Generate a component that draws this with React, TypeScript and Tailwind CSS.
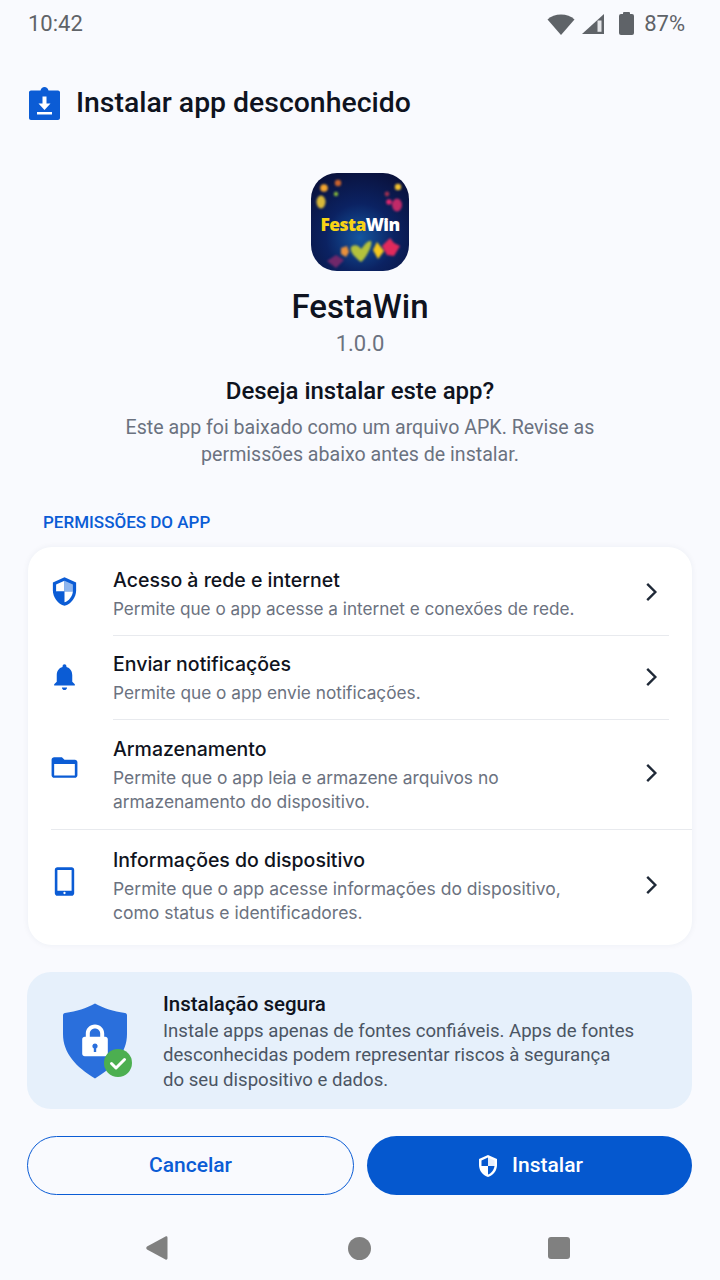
import React from 'react';

const ShieldIcon: React.FC<{ className?: string; outer: string; tl: string; tr: string; bl: string; br: string }> = ({ className, outer, tl, tr, bl, br }) => (
    <svg viewBox="0 0 24 24" className={className}>
        <path fill={outer} d="M12 1 3 5v6c0 5.550 3.840 10.740 9 12 5.160-1.260 9-6.450 9-12V5l-9-4z" />
        <path fill={tl} d="M12 3.600 5.500 6.500V12H12z" />
        <path fill={tr} d="M12 3.600l6.500 2.900V12H12z" />
        <path fill={bl} d="M5.500 12H12v8.400C8.600 19.300 6 16 5.500 12z" />
        <path fill={br} d="M12 12h6.500c-.5 4-3.100 7.300-6.500 8.400z" />
    </svg>
);

const BellIcon = () => (
    <svg viewBox="0 0 24 24" className="w-[33px] h-[33px]" fill="#0b5cd5">
        <path d="M12 22.500c1.100 0 2-.9 2-2h-4c0 1.100.89 2 2 2zm6-6.500v-5c0-3.070-1.640-5.640-4.500-6.320V4c0-.83-.67-1.500-1.500-1.500s-1.500.67-1.500 1.500v.68C7.630 5.360 6 7.920 6 11v5l-2 2v1h16v-1l-2-2z" />
    </svg>
);

const FolderIcon = () => (
    <svg viewBox="0 0 24 24" className="w-[31px] h-[31px]" fill="#0b5cd5">
        <path fillRule="evenodd" d="M20 6h-8l-2-2H4c-1.100 0-2 .9-2 2v12c0 1.100.9 2 2 2h16c1.100 0 2-.9 2-2V8c0-1.100-.9-2-2-2zm0 12.100H4V9.200h16v8.900z" />
    </svg>
);

const TabletIcon = () => (
    <svg viewBox="0 0 24 24" className="w-[31px] h-[31px]" fill="#0b5cd5">
        <path fillRule="evenodd" d="M6.500 1h11c1.100 0 2 .9 2 2v18c0 1.100-.9 2-2 2h-11c-1.100 0-2-.9-2-2V3c0-1.100.9-2 2-2zM6.500 3.100v16h11v-16h-11zM12 20a.9.9 0 1 0 0 1.800.9.9 0 0 0 0-1.800z" />
    </svg>
);

const Chevron: React.FC<{ className: string }> = ({ className }) => (
    <svg viewBox="0 0 24 24" className={`w-[26px] h-[26px] shrink-0 ${className}`} fill="none" stroke="#1f2937" strokeWidth="2.200">
        <path d="m8.500 4.500 7.500 7.500-7.500 7.500" />
    </svg>
);

const AppIcon = () => (
    <div className="relative w-[98px] h-[98px] rounded-[26px] bg-[radial-gradient(circle_at_50%_66%,#14569f_0%,#0b2262_42%,#090c30_100%)] overflow-hidden flex items-center justify-center">
        <svg viewBox="0 0 98 98" className="absolute inset-0 w-full h-full">
            <g style={{ filter: 'blur(1.200px)' }}>
                <circle cx="13" cy="15" r="3.800" fill="#f5a52e" />
                <circle cx="27" cy="10" r="3.200" fill="#c8622c" />
                <circle cx="25" cy="21" r="2.200" fill="#86b83a" />
                <ellipse cx="10" cy="29" rx="4.500" ry="6.500" fill="#d8b83a" />
                <circle cx="87" cy="14" r="3.200" fill="#f0c030" />
                <circle cx="76" cy="21" r="2.400" fill="#a03050" />
                <ellipse cx="86" cy="32" rx="5" ry="6.500" fill="#c02a68" />
                <circle cx="78" cy="29" r="2.800" fill="#e0286e" />
                <path d="M30 75l6-2 2 6-3 5-5-3z" fill="#e8903c" />
                <path d="M40 74c3-3 8-2 10 2 3-3 6-9 10-8 2 3-4 16-10 21-4-3-12-10-10-15z" fill="#b4c23c" />
                <path d="M62 77l4-8 7 9-6 8z" fill="#f5c81e" />
                <path d="M71 73l8-8 4 5 6 3-6 10-7-1z" fill="#e02a5c" />
                <path d="M16 88l9-6 8 5-8 8z" fill="#70286a" />
            </g>
        </svg>
        <span className="relative mt-[6px] font-['Open_Sans',sans-serif] font-extrabold text-[17.500px] leading-none tracking-[-0.600px]">
            <span className="text-[#f8d416]">Festa</span>
            <span className="text-white">Win</span>
        </span>
    </div>
);

const SafetyShield = () => (
    <svg viewBox="0 0 74 76" className="w-[74px] h-[76px]">
        <path d="M32 0.500c9 5 18 7.500 30 9.500 1.200.2 2 1 2 2.200V31c0 19-13 33-32 44.500C13 64 0 50 0 31V12.200c0-1.200.8-2 2-2.200C14 8 23 5.500 32 0.500z" fill="#2a6fdc" />
        <path fill="#fff" fillRule="evenodd" d="M32 21.500c-5.300 0-9.200 4-9.200 9v3.200h-1c-1.500 0-2.600 1.100-2.600 2.500v14.600c0 1.400 1.100 2.500 2.600 2.500h20.400c1.500 0 2.600-1.100 2.600-2.500V36.200c0-1.400-1.100-2.500-2.600-2.500h-1v-3.200c0-5-3.900-9-9.200-9zm0 4c2.900 0 5.200 2.200 5.200 5v3.200H26.800v-3.200c0-2.800 2.300-5 5.200-5zM32 40.500a2.700 2.700 0 0 1 1.200 5.100V49h-2.400v-3.400A2.700 2.700 0 0 1 32 40.500z" />
        <circle cx="55" cy="60" r="14" fill="#4caf50" />
        <path d="m48.500 60.500 4.500 4.500 8.500-8.500" fill="none" stroke="#fff" strokeWidth="3" strokeLinecap="round" strokeLinejoin="round" />
    </svg>
);

const BLUE = '#0b5cd5';

const permissions = [
    {
        title: 'Acesso à rede e internet',
        lines: ['Permite que o app acesse a internet e conexões de rede.'],
        icon: <ShieldIcon className="w-[33px] h-[33px]" outer={BLUE} tl="#ffffff" tr="#8fb6ee" bl={BLUE} br="#ffffff" />,
        row: 'h-[88px] pt-[20px]',
        iconBox: 'mt-[8px]',
        chevron: 'mt-[12px]',
        sub: 'text-[17.150px]',
        divider: 'ml-[85px] mr-[23px]',
    },
    {
        title: 'Enviar notificações',
        lines: ['Permite que o app envie notificações.'],
        icon: <BellIcon />,
        row: 'h-[83px] pt-[15px]',
        iconBox: 'mt-[9px]',
        chevron: 'mt-[13px]',
        sub: 'text-[17.250px]',
        divider: 'ml-[85px] mr-[23px]',
    },
    {
        title: 'Armazenamento',
        lines: ['Permite que o app leia e armazene arquivos no', 'armazenamento do dispositivo.'],
        icon: <FolderIcon />,
        row: 'h-[109px] pt-[16px]',
        iconBox: 'mt-[16px]',
        chevron: 'mt-[24px]',
        sub: 'text-[17.400px]',
        divider: 'ml-[23px]',
    },
    {
        title: 'Informações do dispositivo',
        lines: ['Permite que o app acesse informações do dispositivo,', 'como status e identificadores.'],
        icon: <TabletIcon />,
        row: 'h-[115px] pt-[17px]',
        iconBox: 'mt-[19px]',
        chevron: 'mt-[25px]',
        sub: 'text-[17.500px]',
        divider: '',
    },
];

export default function App() {
    return (
        <div className="w-[720px] h-[1280px] bg-[#f9fafe] font-['Roboto',sans-serif] flex flex-col overflow-hidden">
            {/* status bar */}
            <div className="h-[46px] px-[28px] flex items-center justify-between text-[#5f6368] text-[22px]">
                <span>10:42</span>
                <div className="flex items-center">
                    <svg viewBox="0 0 28 21" className="w-[28px] h-[21px] mt-[2px]" fill="#5f6368">
                        <path d="M14 21 .5 5.500C4 2.300 8.700.5 14 .5s10 1.800 13.500 5L14 21z" />
                    </svg>
                    <svg viewBox="0 0 22 20" className="ml-[7px] w-[22px] h-[20px] mt-[2px]">
                        <path d="M22 0v20H0L22 0z" fill="#5f6368" />
                        <path d="M15.500 6.500h4v11.300h-4z" fill="#e4e5e8" />
                    </svg>
                    <div className="ml-[15px] relative w-[15px] h-[21px] mt-[3px] bg-[#5f6368] rounded-[2px]">
                        <div className="absolute -top-[2px] left-[4px] w-[7px] h-[3px] bg-[#5f6368] rounded-t-[1px]" />
                    </div>
                    <span className="ml-[10px] mr-[7px]">87%</span>
                </div>
            </div>

            {/* title */}
            <div className="mt-[40px] ml-[29px] flex items-center h-[34px]">
                <svg viewBox="0 0 31 33" className="w-[31px] h-[33px]">
                    <path d="M2 3.500h9.500C12 1.500 13.500 0 15.500 0s3.500 1.500 4 3.500H29c1.100 0 2 .9 2 2V31c0 1.100-.9 2-2 2H2c-1.100 0-2-.9-2-2V5.500c0-1.100.9-2 2-2z" fill={BLUE} />
                    <path d="M13.500 9.500h4v7h4l-6 6.500-6-6.500h4v-7z" fill="#fff" />
                    <rect x="8" y="25" width="15" height="2.500" fill="#fff" />
                </svg>
                <h1 className="ml-[16px] text-[28.400px] leading-none font-medium text-[#0f1320]">Instalar app desconhecido</h1>
            </div>

            {/* app header */}
            <div className="mt-[53px] flex flex-col items-center">
                <AppIcon />
                <div className="mt-[17px] text-[33px] leading-[38px] font-medium text-[#0f1320]">FestaWin</div>
                <div className="mt-[5px] text-[22px] leading-[26px] text-[#6b7280]">1.0.0</div>
                <div className="mt-[20px] text-[24px] leading-[28px] font-medium text-[#0f1320]">Deseja instalar este app?</div>
                <p className="mt-[9px] text-[19.600px] leading-[27px] text-[#6b7280] text-center">
                    Este app foi baixado como um arquivo APK. Revise as
                    <br />
                    permissões abaixo antes de instalar.
                </p>
            </div>

            <div className="mt-[44px] ml-[43px] text-[17px] leading-[20px] font-medium text-[#0b5cd5]">PERMISSÕES DO APP</div>

            {/* permissions card */}
            <div className="mt-[15px] mx-[28px] h-[398px] bg-white rounded-[24px] shadow-[0_0_6px_rgba(30,50,90,0.06)] flex flex-col">
                {permissions.map((p, i) => (
                    <React.Fragment key={p.title}>
                        <div className={`${p.row} flex items-start pl-[21px] pr-[28px]`}>
                            <div className={`w-[31px] flex justify-center shrink-0 ${p.iconBox}`}>{p.icon}</div>
                            <div className="ml-[33px] flex-1 font-['Inter',sans-serif]">
                                <div className="text-[19.500px] leading-[26px] font-medium text-[#0f1320]">{p.title}</div>
                                <div className={`mt-[4px] leading-[24px] text-[#6b7280] ${p.sub}`}>
                                    {p.lines.map(line => (
                                        <div key={line}>{line}</div>
                                    ))}
                                </div>
                            </div>
                            <Chevron className={p.chevron} />
                        </div>
                        {i < permissions.length - 1 && <div className={`h-px bg-[#e8eaee] ${p.divider}`} />}
                    </React.Fragment>
                ))}
            </div>

            {/* safety note */}
            <div className="mt-[27px] ml-[27px] mr-[28px] h-[137px] rounded-[24px] bg-[#e6f0fb] flex items-center pl-[36px]">
                <SafetyShield />
                <div className="ml-[26px] pt-[2px]">
                    <div className="text-[20.500px] leading-[26px] font-medium text-[#0f1320]">Instalação segura</div>
                    <div className="mt-[2px] text-[18.600px] leading-[24.500px] text-[#4b5563]">
                        Instale apps apenas de fontes confiáveis. Apps de fontes
                        <br />
                        desconhecidas podem representar riscos à segurança
                        <br />
                        do seu dispositivo e dados.
                    </div>
                </div>
            </div>

            {/* actions */}
            <div className="mt-[27px] ml-[27px] mr-[28px] flex gap-[13px]">
                <button className="flex-1 h-[59px] pt-[1px] rounded-full border border-[#0b5cd5] text-[#0b5cd5] text-[21px] font-medium">Cancelar</button>
                <button className="flex-1 h-[59px] pt-[1px] rounded-full bg-[#0558cf] text-white text-[21px] font-medium flex items-center justify-center">
                    <ShieldIcon className="w-[24px] h-[24px]" outer="#ffffff" tl="#0558cf" tr="#e6eefb" bl="#ffffff" br="#0558cf" />
                    <span className="ml-[12px]">Instalar</span>
                </button>
            </div>

            {/* nav bar */}
            <div className="mt-[41px] pr-[4px] flex items-center justify-center h-[24px]">
                <svg viewBox="0 0 22 24" className="w-[22px] h-[24px] mr-[180px]" fill="#808080">
                    <path d="M19.500.5c1 -.5 2 0 2 1.200v20.600c0 1.200-1 1.700-2 1.200L1 13.500c-1-.6-1-2.400 0-3L19.500.5z" />
                </svg>
                <div className="w-[23px] h-[23px] rounded-full bg-[#808080]" />
                <div className="ml-[177px] w-[22px] h-[22px] rounded-[3px] bg-[#808080]" />
            </div>
        </div>
    );
}
